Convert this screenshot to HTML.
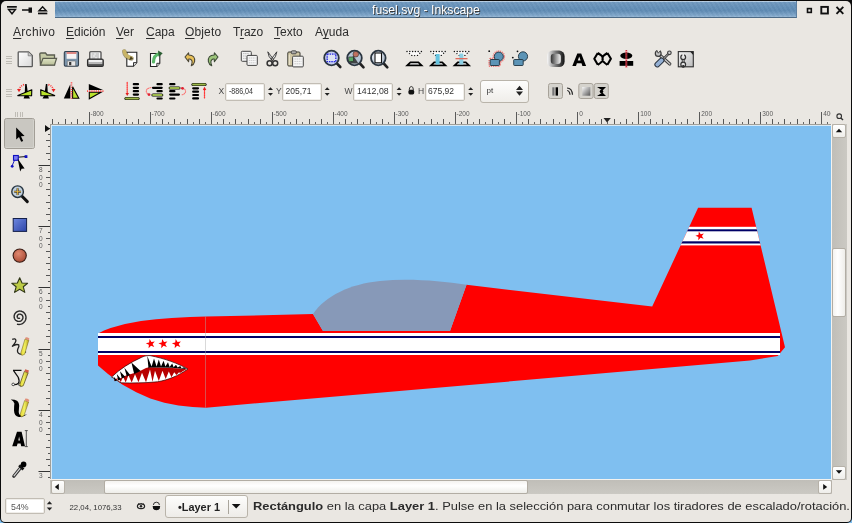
<!DOCTYPE html>
<html><head><meta charset="utf-8">
<style>
*{margin:0;padding:0;box-sizing:border-box}
html,body{width:852px;height:523px;overflow:hidden;background:#000}
body{position:relative;font-family:"Liberation Sans",sans-serif;color:#1a1a1a}
.a{position:absolute}
.menu,.t,.status,#ttext{filter:grayscale(1)}
#win{position:absolute;left:1px;top:1px;width:850px;height:521px;background:#eae7e2;border-radius:5px 5px 4px 4px}
#title{left:55px;top:1px;width:742px;height:17px;background:repeating-linear-gradient(60deg,rgba(255,255,255,0.035) 0 2px,rgba(0,0,0,0.02) 2px 4px),linear-gradient(#b6cde2 0,#b6cde2 1px,#7199bf 1px,#6490b8 40%,#5f8bb4 60%,#7fa6ca 90%,#95b6d4);border-bottom:1px solid #4c6a86;border-right:1px solid #5d80a2}
#ttext{left:317px;top:2px;color:#fff;font-size:12.4px;white-space:nowrap;text-shadow:1px 1px 0 #2a3a4a;transform:scaleX(0.985);transform-origin:0 0}
.menu{position:absolute;top:25px;font-size:12px;color:#2e2e2e;white-space:nowrap}
.u{text-decoration:underline;text-underline-offset:2px}
.ent{position:absolute;background:#fff;border:1px solid #c2bdb4;border-radius:2px;box-shadow:inset 0 0 0 1px #f0eeea}
.t{position:absolute;white-space:nowrap;transform-origin:0 0;color:#333}
.lab{position:absolute;font-size:10px;color:#444}
#canvas{left:50px;top:124px;width:781px;height:355px;background:#7fbff0;border-top:1px solid #a29f98;border-left:1px solid #a29f98;box-shadow:inset 1px 1px 0 #d6eaf8}
.rl{position:absolute;font-size:7px;color:#444;font-family:"Liberation Sans",sans-serif}
.status{position:absolute;top:500px;left:253px;font-size:11px;color:#2b2b2b;white-space:nowrap;transform-origin:0 0;transform:scaleX(1.172)}
</style></head><body>
<div class="a" style="left:0;top:500px;width:852px;height:23px;background:#7fbff0"></div>
<div class="a" style="left:0;top:0;width:852px;height:523px;background:#0c0c0c;border-radius:0 0 5px 5px"></div>
<div id="win"></div>
<!-- title bar -->
<div class="a" id="title"><div class="a" id="ttext">fusel.svg - Inkscape</div></div>

<!-- menu -->
<div class="menu" style="left:13px;letter-spacing:0.3px"><span class="u">A</span>rchivo</div>
<div class="menu" style="left:66px"><span class="u">E</span>dición</div>
<div class="menu" style="left:116px"><span class="u">V</span>er</div>
<div class="menu" style="left:146px"><span class="u">C</span>apa</div>
<div class="menu" style="left:185px;letter-spacing:0.15px"><span class="u">O</span>bjeto</div>
<div class="menu" style="left:233px">T<span class="u">r</span>azo</div>
<div class="menu" style="left:274px"><span class="u">T</span>exto</div>
<div class="menu" style="left:315px">A<span class="u">y</span>uda</div>

<!-- toolbar 2 entries -->
<div class="t" style="left:218.5px;top:85.5px;font-size:8.5px;color:#444">X</div>
<div class="ent" style="left:225px;top:82.5px;width:40px;height:18px"></div>
<div class="t" style="left:228.5px;top:85.5px;font-size:8.5px;transform:scaleX(0.83)">-886,04</div>
<div class="t" style="left:276px;top:85.5px;font-size:8.5px;color:#444">Y</div>
<div class="ent" style="left:282px;top:82.5px;width:40px;height:18px"></div>
<div class="t" style="left:285.5px;top:85.5px;font-size:8.5px;transform:scaleX(1.0)">205,71</div>
<div class="t" style="left:344.5px;top:85.5px;font-size:8.5px;color:#444">W</div>
<div class="ent" style="left:353px;top:82.5px;width:40px;height:18px"></div>
<div class="t" style="left:357px;top:85.5px;font-size:8.5px;transform:scaleX(1.03)">1412,08</div>
<div class="t" style="left:418px;top:85.5px;font-size:8.5px;color:#444">H</div>
<div class="ent" style="left:425px;top:82.5px;width:40px;height:18px"></div>
<div class="t" style="left:428px;top:85.5px;font-size:8.5px;transform:scaleX(1.0)">675,92</div>
<div class="a" style="left:480px;top:80px;width:48.5px;height:22.5px;background:linear-gradient(#fdfdfc,#efede9);border:1px solid #b9b4aa;border-radius:3px"></div>
<div class="t" style="left:486.5px;top:86px;font-size:8px">pt</div>

<!-- rulers -->
<svg class="a" style="left:0;top:0;filter:grayscale(1)" width="852" height="523" viewBox="0 0 852 523"><defs><style>.rt{font:6.5px "Liberation Sans",sans-serif;fill:#5a5a5a}</style><clipPath id="hrc"><rect x="51" y="100" width="780" height="25"/></clipPath><clipPath id="vrc"><rect x="30" y="124" width="21" height="355"/></clipPath></defs><g clip-path="url(#hrc)"><line x1="52.5" y1="119" x2="52.5" y2="124" stroke="#555"/><line x1="58.5" y1="122" x2="58.5" y2="124" stroke="#666"/><line x1="65.5" y1="119" x2="65.5" y2="124" stroke="#555"/><line x1="71.5" y1="122" x2="71.5" y2="124" stroke="#666"/><line x1="77.5" y1="119" x2="77.5" y2="124" stroke="#555"/><line x1="83.5" y1="122" x2="83.5" y2="124" stroke="#666"/><line x1="89.5" y1="112" x2="89.5" y2="124" stroke="#5a5a5a"/><text x="90.6" y="116" class="rt">-800</text><line x1="95.5" y1="122" x2="95.5" y2="124" stroke="#666"/><line x1="101.5" y1="119" x2="101.5" y2="124" stroke="#555"/><line x1="107.5" y1="122" x2="107.5" y2="124" stroke="#666"/><line x1="113.5" y1="119" x2="113.5" y2="124" stroke="#555"/><line x1="119.5" y1="122" x2="119.5" y2="124" stroke="#666"/><line x1="126.5" y1="119" x2="126.5" y2="124" stroke="#555"/><line x1="132.5" y1="122" x2="132.5" y2="124" stroke="#666"/><line x1="138.5" y1="119" x2="138.5" y2="124" stroke="#555"/><line x1="144.5" y1="122" x2="144.5" y2="124" stroke="#666"/><line x1="150.5" y1="112" x2="150.5" y2="124" stroke="#5a5a5a"/><text x="151.6" y="116" class="rt">-700</text><line x1="156.5" y1="122" x2="156.5" y2="124" stroke="#666"/><line x1="162.5" y1="119" x2="162.5" y2="124" stroke="#555"/><line x1="168.5" y1="122" x2="168.5" y2="124" stroke="#666"/><line x1="174.5" y1="119" x2="174.5" y2="124" stroke="#555"/><line x1="180.5" y1="122" x2="180.5" y2="124" stroke="#666"/><line x1="187.5" y1="119" x2="187.5" y2="124" stroke="#555"/><line x1="193.5" y1="122" x2="193.5" y2="124" stroke="#666"/><line x1="199.5" y1="119" x2="199.5" y2="124" stroke="#555"/><line x1="205.5" y1="122" x2="205.5" y2="124" stroke="#666"/><line x1="211.5" y1="112" x2="211.5" y2="124" stroke="#5a5a5a"/><text x="212.6" y="116" class="rt">-600</text><line x1="217.5" y1="122" x2="217.5" y2="124" stroke="#666"/><line x1="223.5" y1="119" x2="223.5" y2="124" stroke="#555"/><line x1="229.5" y1="122" x2="229.5" y2="124" stroke="#666"/><line x1="235.5" y1="119" x2="235.5" y2="124" stroke="#555"/><line x1="241.5" y1="122" x2="241.5" y2="124" stroke="#666"/><line x1="248.5" y1="119" x2="248.5" y2="124" stroke="#555"/><line x1="254.5" y1="122" x2="254.5" y2="124" stroke="#666"/><line x1="260.5" y1="119" x2="260.5" y2="124" stroke="#555"/><line x1="266.5" y1="122" x2="266.5" y2="124" stroke="#666"/><line x1="272.5" y1="112" x2="272.5" y2="124" stroke="#5a5a5a"/><text x="273.6" y="116" class="rt">-500</text><line x1="278.5" y1="122" x2="278.5" y2="124" stroke="#666"/><line x1="284.5" y1="119" x2="284.5" y2="124" stroke="#555"/><line x1="290.5" y1="122" x2="290.5" y2="124" stroke="#666"/><line x1="296.5" y1="119" x2="296.5" y2="124" stroke="#555"/><line x1="302.5" y1="122" x2="302.5" y2="124" stroke="#666"/><line x1="309.5" y1="119" x2="309.5" y2="124" stroke="#555"/><line x1="315.5" y1="122" x2="315.5" y2="124" stroke="#666"/><line x1="321.5" y1="119" x2="321.5" y2="124" stroke="#555"/><line x1="327.5" y1="122" x2="327.5" y2="124" stroke="#666"/><line x1="333.5" y1="112" x2="333.5" y2="124" stroke="#5a5a5a"/><text x="334.6" y="116" class="rt">-400</text><line x1="339.5" y1="122" x2="339.5" y2="124" stroke="#666"/><line x1="345.5" y1="119" x2="345.5" y2="124" stroke="#555"/><line x1="351.5" y1="122" x2="351.5" y2="124" stroke="#666"/><line x1="357.5" y1="119" x2="357.5" y2="124" stroke="#555"/><line x1="363.5" y1="122" x2="363.5" y2="124" stroke="#666"/><line x1="370.5" y1="119" x2="370.5" y2="124" stroke="#555"/><line x1="376.5" y1="122" x2="376.5" y2="124" stroke="#666"/><line x1="382.5" y1="119" x2="382.5" y2="124" stroke="#555"/><line x1="388.5" y1="122" x2="388.5" y2="124" stroke="#666"/><line x1="394.5" y1="112" x2="394.5" y2="124" stroke="#5a5a5a"/><text x="395.6" y="116" class="rt">-300</text><line x1="400.5" y1="122" x2="400.5" y2="124" stroke="#666"/><line x1="406.5" y1="119" x2="406.5" y2="124" stroke="#555"/><line x1="412.5" y1="122" x2="412.5" y2="124" stroke="#666"/><line x1="418.5" y1="119" x2="418.5" y2="124" stroke="#555"/><line x1="424.5" y1="122" x2="424.5" y2="124" stroke="#666"/><line x1="431.5" y1="119" x2="431.5" y2="124" stroke="#555"/><line x1="437.5" y1="122" x2="437.5" y2="124" stroke="#666"/><line x1="443.5" y1="119" x2="443.5" y2="124" stroke="#555"/><line x1="449.5" y1="122" x2="449.5" y2="124" stroke="#666"/><line x1="455.5" y1="112" x2="455.5" y2="124" stroke="#5a5a5a"/><text x="456.6" y="116" class="rt">-200</text><line x1="461.5" y1="122" x2="461.5" y2="124" stroke="#666"/><line x1="467.5" y1="119" x2="467.5" y2="124" stroke="#555"/><line x1="473.5" y1="122" x2="473.5" y2="124" stroke="#666"/><line x1="479.5" y1="119" x2="479.5" y2="124" stroke="#555"/><line x1="485.5" y1="122" x2="485.5" y2="124" stroke="#666"/><line x1="492.5" y1="119" x2="492.5" y2="124" stroke="#555"/><line x1="498.5" y1="122" x2="498.5" y2="124" stroke="#666"/><line x1="504.5" y1="119" x2="504.5" y2="124" stroke="#555"/><line x1="510.5" y1="122" x2="510.5" y2="124" stroke="#666"/><line x1="516.5" y1="112" x2="516.5" y2="124" stroke="#5a5a5a"/><text x="517.6" y="116" class="rt">-100</text><line x1="522.5" y1="122" x2="522.5" y2="124" stroke="#666"/><line x1="528.5" y1="119" x2="528.5" y2="124" stroke="#555"/><line x1="534.5" y1="122" x2="534.5" y2="124" stroke="#666"/><line x1="540.5" y1="119" x2="540.5" y2="124" stroke="#555"/><line x1="546.5" y1="122" x2="546.5" y2="124" stroke="#666"/><line x1="553.5" y1="119" x2="553.5" y2="124" stroke="#555"/><line x1="559.5" y1="122" x2="559.5" y2="124" stroke="#666"/><line x1="565.5" y1="119" x2="565.5" y2="124" stroke="#555"/><line x1="571.5" y1="122" x2="571.5" y2="124" stroke="#666"/><line x1="577.5" y1="112" x2="577.5" y2="124" stroke="#5a5a5a"/><text x="579.2" y="116" class="rt">0</text><line x1="583.5" y1="122" x2="583.5" y2="124" stroke="#666"/><line x1="589.5" y1="119" x2="589.5" y2="124" stroke="#555"/><line x1="595.5" y1="122" x2="595.5" y2="124" stroke="#666"/><line x1="601.5" y1="119" x2="601.5" y2="124" stroke="#555"/><line x1="607.5" y1="122" x2="607.5" y2="124" stroke="#666"/><line x1="614.5" y1="119" x2="614.5" y2="124" stroke="#555"/><line x1="620.5" y1="122" x2="620.5" y2="124" stroke="#666"/><line x1="626.5" y1="119" x2="626.5" y2="124" stroke="#555"/><line x1="632.5" y1="122" x2="632.5" y2="124" stroke="#666"/><line x1="638.5" y1="112" x2="638.5" y2="124" stroke="#5a5a5a"/><text x="640.2" y="116" class="rt">100</text><line x1="644.5" y1="122" x2="644.5" y2="124" stroke="#666"/><line x1="650.5" y1="119" x2="650.5" y2="124" stroke="#555"/><line x1="656.5" y1="122" x2="656.5" y2="124" stroke="#666"/><line x1="662.5" y1="119" x2="662.5" y2="124" stroke="#555"/><line x1="668.5" y1="122" x2="668.5" y2="124" stroke="#666"/><line x1="675.5" y1="119" x2="675.5" y2="124" stroke="#555"/><line x1="681.5" y1="122" x2="681.5" y2="124" stroke="#666"/><line x1="687.5" y1="119" x2="687.5" y2="124" stroke="#555"/><line x1="693.5" y1="122" x2="693.5" y2="124" stroke="#666"/><line x1="699.5" y1="112" x2="699.5" y2="124" stroke="#5a5a5a"/><text x="701.2" y="116" class="rt">200</text><line x1="705.5" y1="122" x2="705.5" y2="124" stroke="#666"/><line x1="711.5" y1="119" x2="711.5" y2="124" stroke="#555"/><line x1="717.5" y1="122" x2="717.5" y2="124" stroke="#666"/><line x1="723.5" y1="119" x2="723.5" y2="124" stroke="#555"/><line x1="729.5" y1="122" x2="729.5" y2="124" stroke="#666"/><line x1="736.5" y1="119" x2="736.5" y2="124" stroke="#555"/><line x1="742.5" y1="122" x2="742.5" y2="124" stroke="#666"/><line x1="748.5" y1="119" x2="748.5" y2="124" stroke="#555"/><line x1="754.5" y1="122" x2="754.5" y2="124" stroke="#666"/><line x1="760.5" y1="112" x2="760.5" y2="124" stroke="#5a5a5a"/><text x="762.2" y="116" class="rt">300</text><line x1="766.5" y1="122" x2="766.5" y2="124" stroke="#666"/><line x1="772.5" y1="119" x2="772.5" y2="124" stroke="#555"/><line x1="778.5" y1="122" x2="778.5" y2="124" stroke="#666"/><line x1="784.5" y1="119" x2="784.5" y2="124" stroke="#555"/><line x1="790.5" y1="122" x2="790.5" y2="124" stroke="#666"/><line x1="797.5" y1="119" x2="797.5" y2="124" stroke="#555"/><line x1="803.5" y1="122" x2="803.5" y2="124" stroke="#666"/><line x1="809.5" y1="119" x2="809.5" y2="124" stroke="#555"/><line x1="815.5" y1="122" x2="815.5" y2="124" stroke="#666"/><line x1="821.5" y1="112" x2="821.5" y2="124" stroke="#5a5a5a"/><text x="823.2" y="116" class="rt">400</text><line x1="827.5" y1="122" x2="827.5" y2="124" stroke="#666"/></g><g clip-path="url(#vrc)"><line x1="46" y1="128.5" x2="50" y2="128.5" stroke="#555"/><line x1="48" y1="134.5" x2="50" y2="134.5" stroke="#555"/><line x1="46" y1="140.5" x2="50" y2="140.5" stroke="#555"/><line x1="48" y1="146.5" x2="50" y2="146.5" stroke="#555"/><line x1="46" y1="153.5" x2="50" y2="153.5" stroke="#555"/><line x1="48" y1="159.5" x2="50" y2="159.5" stroke="#555"/><line x1="38.5" y1="165.5" x2="50" y2="165.5" stroke="#333"/><text x="39" y="172.1" class="rt">8</text><text x="39" y="179.5" class="rt">0</text><text x="39" y="186.9" class="rt">0</text><line x1="48" y1="171.5" x2="50" y2="171.5" stroke="#555"/><line x1="46" y1="177.5" x2="50" y2="177.5" stroke="#555"/><line x1="48" y1="183.5" x2="50" y2="183.5" stroke="#555"/><line x1="46" y1="189.5" x2="50" y2="189.5" stroke="#555"/><line x1="48" y1="195.5" x2="50" y2="195.5" stroke="#555"/><line x1="46" y1="202.5" x2="50" y2="202.5" stroke="#555"/><line x1="48" y1="208.5" x2="50" y2="208.5" stroke="#555"/><line x1="46" y1="214.5" x2="50" y2="214.5" stroke="#555"/><line x1="48" y1="220.5" x2="50" y2="220.5" stroke="#555"/><line x1="38.5" y1="226.5" x2="50" y2="226.5" stroke="#333"/><text x="39" y="233.1" class="rt">7</text><text x="39" y="240.5" class="rt">0</text><text x="39" y="247.9" class="rt">0</text><line x1="48" y1="232.5" x2="50" y2="232.5" stroke="#555"/><line x1="46" y1="238.5" x2="50" y2="238.5" stroke="#555"/><line x1="48" y1="244.5" x2="50" y2="244.5" stroke="#555"/><line x1="46" y1="251.5" x2="50" y2="251.5" stroke="#555"/><line x1="48" y1="257.5" x2="50" y2="257.5" stroke="#555"/><line x1="46" y1="263.5" x2="50" y2="263.5" stroke="#555"/><line x1="48" y1="269.5" x2="50" y2="269.5" stroke="#555"/><line x1="46" y1="275.5" x2="50" y2="275.5" stroke="#555"/><line x1="48" y1="281.5" x2="50" y2="281.5" stroke="#555"/><line x1="38.5" y1="287.5" x2="50" y2="287.5" stroke="#333"/><text x="39" y="294.1" class="rt">6</text><text x="39" y="301.5" class="rt">0</text><text x="39" y="308.90000000000003" class="rt">0</text><line x1="48" y1="293.5" x2="50" y2="293.5" stroke="#555"/><line x1="46" y1="300.5" x2="50" y2="300.5" stroke="#555"/><line x1="48" y1="306.5" x2="50" y2="306.5" stroke="#555"/><line x1="46" y1="312.5" x2="50" y2="312.5" stroke="#555"/><line x1="48" y1="318.5" x2="50" y2="318.5" stroke="#555"/><line x1="46" y1="324.5" x2="50" y2="324.5" stroke="#555"/><line x1="48" y1="330.5" x2="50" y2="330.5" stroke="#555"/><line x1="46" y1="336.5" x2="50" y2="336.5" stroke="#555"/><line x1="48" y1="342.5" x2="50" y2="342.5" stroke="#555"/><line x1="38.5" y1="349.5" x2="50" y2="349.5" stroke="#333"/><text x="39" y="356.1" class="rt">5</text><text x="39" y="363.5" class="rt">0</text><text x="39" y="370.90000000000003" class="rt">0</text><line x1="48" y1="355.5" x2="50" y2="355.5" stroke="#555"/><line x1="46" y1="361.5" x2="50" y2="361.5" stroke="#555"/><line x1="48" y1="367.5" x2="50" y2="367.5" stroke="#555"/><line x1="46" y1="373.5" x2="50" y2="373.5" stroke="#555"/><line x1="48" y1="379.5" x2="50" y2="379.5" stroke="#555"/><line x1="46" y1="385.5" x2="50" y2="385.5" stroke="#555"/><line x1="48" y1="391.5" x2="50" y2="391.5" stroke="#555"/><line x1="46" y1="398.5" x2="50" y2="398.5" stroke="#555"/><line x1="48" y1="404.5" x2="50" y2="404.5" stroke="#555"/><line x1="38.5" y1="410.5" x2="50" y2="410.5" stroke="#333"/><text x="39" y="417.1" class="rt">4</text><text x="39" y="424.5" class="rt">0</text><text x="39" y="431.90000000000003" class="rt">0</text><line x1="48" y1="416.5" x2="50" y2="416.5" stroke="#555"/><line x1="46" y1="422.5" x2="50" y2="422.5" stroke="#555"/><line x1="48" y1="428.5" x2="50" y2="428.5" stroke="#555"/><line x1="46" y1="434.5" x2="50" y2="434.5" stroke="#555"/><line x1="48" y1="440.5" x2="50" y2="440.5" stroke="#555"/><line x1="46" y1="447.5" x2="50" y2="447.5" stroke="#555"/><line x1="48" y1="453.5" x2="50" y2="453.5" stroke="#555"/><line x1="46" y1="459.5" x2="50" y2="459.5" stroke="#555"/><line x1="48" y1="465.5" x2="50" y2="465.5" stroke="#555"/><line x1="38.5" y1="471.5" x2="50" y2="471.5" stroke="#333"/><text x="39" y="478.1" class="rt">3</text><text x="39" y="485.5" class="rt">0</text><text x="39" y="492.90000000000003" class="rt">0</text><line x1="48" y1="477.5" x2="50" y2="477.5" stroke="#555"/></g><path d="M603.5,118 L610.8,118 L607.1,122.4 Z" fill="#222"/><path d="M45,125 L45,132 L50.2,128.8 Z" fill="#111"/></svg>
<div class="a" id="canvas"></div>
<svg class="a" style="left:0;top:0" width="852" height="523" viewBox="0 0 852 523">
<defs><clipPath id="cc"><rect x="51" y="125" width="780" height="354"/></clipPath>
<path id="star" d="M0,-4.8 L1.2,-1.6 L4.6,-1.5 L1.9,0.6 L2.9,3.9 L0,2 L-2.9,3.9 L-1.9,0.6 L-4.6,-1.5 L-1.2,-1.6 Z"/></defs>
<g clip-path="url(#cc)">
<path fill="#f00" d="M98,333.4 L104,330.5 L110.6,327.9 L125,324 L141,321 L156,319.2 L171.7,318 L190,317 L206,316.6 L313,314 L323,331 L450,331 L466.5,284.8 L652.2,306.5 L698.1,207.8 L751.6,207.8 L785,347.2 L777.7,356 L750,360.6 L206,407.7 L192.6,407 L178.5,405.6 L164.4,402.8 L150.3,398.6 L136.3,392.3 L122.2,384.5 L108,374 L98,365.5 Z"/>
<path fill="#8799b8" d="M313,314 C325,296 350,284 380,281 C410,278 440,281 466.5,284.8 L450,331 L323,331 Z"/>
<rect x="98" y="333" width="682" height="22" fill="#fff"/>
<rect x="98" y="336" width="682" height="2" fill="#000066"/>
<rect x="98" y="351" width="682" height="2" fill="#000066"/>
<clipPath id="tailclip"><path d="M698.1,207.8 L751.6,207.8 L785,347.2 L640,347.2 L652.2,306.5 Z"/></clipPath>
<g clip-path="url(#tailclip)">
<rect x="670" y="226.8" width="110" height="18.6" fill="#fff"/>
<rect x="670" y="229.3" width="110" height="2" fill="#000066"/>
<rect x="670" y="241.3" width="110" height="2.2" fill="#000066"/>
</g>
<use href="#star" transform="translate(150.6,343.8) rotate(-12)" fill="#f00"/>
<use href="#star" transform="translate(163.2,343.8) rotate(-12)" fill="#f00"/>
<use href="#star" transform="translate(176.7,343.8) rotate(-12)" fill="#f00"/>
<use href="#star" transform="translate(700,235.9) rotate(-15) scale(0.95)" fill="#f00"/>
<line x1="205.5" y1="316.6" x2="205.5" y2="407.7" stroke="#aaa" stroke-opacity="0.45" stroke-width="1"/>
<path fill="#fff" stroke="#2a0000" stroke-width="0.7" d="M111.6,377 C120,369 130,362.5 141.8,357.2 C145,355.8 147,355.5 150,355.6 C165,358.5 178,363.5 187.9,369 C178,376 168,380 157.4,381.8 C145,383 132,383.2 121,382.8 Z"/>
<path fill="#b80000" d="M114.0,381.0 L120.5,378.2 L126.0,375.5 L131.0,374.0 L136.0,372.5 L141.0,370.6 L146.0,368.0 L149.0,367.3 L160.0,367.6 L172.0,368.0 L181.0,368.6 L186.5,369.2 L182.7,371.3 L180.8,372.8 L178.8,372.6 L176.5,374.9 L174.2,372.2 L171.5,377.3 L168.8,371.5 L165.7,379.1 L162.5,370.8 L158.8,380.9 L155.0,370.8 L152.5,381.7 L150.0,369.6 L146.0,382.2 L142.0,372.8 L138.5,382.3 L135.0,374.2 L131.7,382.4 L128.4,375.2 L125.7,382.4 L123.0,376.6 L120.8,382.3 L118.5,378.2 L115.2,379.0 Z"/>
<path fill="#000" d="M131.4,362.6 L134.2,374 L140.6,371 Z M124.4,367.8 L126.8,376.4 L130.2,375 Z M120,371.2 L121.8,378.6 L125.4,377 Z M116.8,374 L118.2,380.4 L121,379.2 Z M113.6,376.4 L114.8,381.2 L117,380.6 Z"/>
<path fill="#000" d="M147.3,356 L151.6,366.5 L154,358.6 L156.6,366.4 L158.8,359.6 L161,366.4 L163.6,360.8 L165.4,366.6 L168,362.3 L169.6,366.9 L172.2,363.6 L173.6,367.3 L176,364.8 L177.6,367.6 L180.2,365.9 L181.6,368.2 L184,367.3 L186.5,368.9 L172,367.8 L160,367.4 L149.5,367.4 L148.5,368.5 Z"/>
</g>
</svg>

<!-- scrollbars -->
<div class="a" style="left:831px;top:124px;width:1px;height:356px;background:#f3f2ef"></div>
<div class="a" style="left:832px;top:124px;width:15px;height:356px;background:linear-gradient(90deg,#c0beb8,#cbc9c3)"></div>
<div class="a" style="left:832px;top:248px;width:14px;height:69px;background:linear-gradient(90deg,#f4f3f0,#fff 40%,#eeede9);border:1px solid #b2ada4;border-radius:2px"></div>
<div class="a" style="left:832px;top:124px;width:14px;height:14px;background:linear-gradient(#fff,#efeeea);border:1px solid #b6b1a8;border-radius:2px"></div>
<div class="a" style="left:832px;top:466px;width:14px;height:14px;background:linear-gradient(#fff,#efeeea);border:1px solid #b6b1a8;border-radius:2px"></div>
<div class="a" style="left:50px;top:479px;width:782px;height:1px;background:#f3f2ef"></div>
<div class="a" style="left:50px;top:480px;width:782px;height:14px;background:linear-gradient(#c0beb8,#cbc9c3)"></div>
<div class="a" style="left:104px;top:480px;width:424px;height:14px;background:linear-gradient(#f4f3f0,#fff 40%,#eeede9);border:1px solid #b2ada4;border-radius:2px"></div>
<div class="a" style="left:50.5px;top:480px;width:14.5px;height:14px;background:linear-gradient(#fff,#efeeea);border:1px solid #b6b1a8;border-radius:2px"></div>
<div class="a" style="left:818px;top:480px;width:14px;height:14px;background:linear-gradient(#fff,#efeeea);border:1px solid #b6b1a8;border-radius:2px"></div>

<!-- status bar -->
<div class="ent" style="left:5px;top:498px;width:40px;height:16px"></div>
<div class="t" style="left:11px;top:501.5px;font-size:8.8px;color:#555">54%</div>
<div class="t" style="left:69.5px;top:502.5px;font-size:7.8px;color:#333;transform:scaleX(1.0)">22,04, 1076,33</div>
<div class="a" style="left:164.5px;top:495px;width:83.5px;height:22.5px;background:linear-gradient(#fdfdfc,#eeece8);border:1px solid #b9b4aa;border-radius:3px"></div>
<div class="t" style="left:177.5px;top:501.5px;font-size:10.2px;font-weight:bold;color:#222;transform:scaleX(1.07)">•Layer 1</div>
<div class="status"><b>Rectángulo</b> en la capa <b>Layer 1</b>. Pulse en la selección para conmutar los tiradores de escalado/rotación.</div>
<svg class="a" style="left:0;top:0" width="852" height="523" viewBox="0 0 852 523">
<defs>
<linearGradient id="gdoc" x1="0" y1="0" x2="1" y2="1"><stop offset="0" stop-color="#fff"/><stop offset="1" stop-color="#d8d8d8"/></linearGradient>
<linearGradient id="gfold" x1="0" y1="0" x2="0" y2="1"><stop offset="0" stop-color="#dfe3c4"/><stop offset="1" stop-color="#b9bf98"/></linearGradient>
<linearGradient id="gfs" x1="0" y1="0" x2="1" y2="0"><stop offset="0" stop-color="#fff"/><stop offset="0.25" stop-color="#666"/><stop offset="0.55" stop-color="#999"/><stop offset="0.8" stop-color="#222"/><stop offset="1" stop-color="#eee"/></linearGradient>
<linearGradient id="gsq" x1="0" y1="0" x2="1" y2="1"><stop offset="0" stop-color="#fafafa"/><stop offset="1" stop-color="#555"/></linearGradient>
<radialGradient id="glens" cx="0.4" cy="0.35" r="0.7"><stop offset="0" stop-color="#f4f6fa"/><stop offset="1" stop-color="#aab8c8"/></radialGradient>
</defs>
<!-- title bar icons -->
<rect x="7" y="6" width="9.8" height="1.7" fill="#111"/>
<path d="M8.6,9.6 L15.4,9.6 L12,13.8 Z" fill="none" stroke="#111" stroke-width="1.5" stroke-linejoin="miter"/>
<path d="M22,9.3 L29,9.3 L29,10.8 L22,10.8 Z M28.5,7.5 L32,7.5 L32,12.8 L28.5,12.8 Z" fill="#111"/>
<path d="M39,10.8 L42.6,6.8 L46.3,10.8 Z" fill="none" stroke="#111" stroke-width="1.4"/>
<rect x="38" y="12.6" width="9.3" height="1.7" fill="#111"/>
<rect x="807.5" y="8.6" width="3.8" height="3.8" fill="none" stroke="#111" stroke-width="1.6"/>
<rect x="821.3" y="6.9" width="6.6" height="6.6" fill="none" stroke="#111" stroke-width="1.9"/>
<path d="M836.5,6.8 L843.3,13.8 M843.3,6.8 L836.5,13.8" stroke="#111" stroke-width="1.9"/>
<!-- toolbar grips -->
<g fill="#bfbcb5"><rect x="6" y="56" width="6" height="1"/><rect x="6" y="58" width="6" height="1"/><rect x="6" y="61" width="6" height="1"/><rect x="6" y="63" width="6" height="1"/>
<rect x="6" y="89" width="6" height="1"/><rect x="6" y="91" width="6" height="1"/><rect x="6" y="94" width="6" height="1"/><rect x="6" y="96" width="6" height="1"/>
<rect x="15" y="112" width="1" height="5"/><rect x="17" y="112" width="1" height="5"/><rect x="20" y="112" width="1" height="5"/><rect x="22" y="112" width="1" height="5"/></g>
<!-- new -->
<path d="M18.2,52.5 Q18.2,51.8 19,51.8 L28.5,51.8 L32.3,55.6 L32.3,66 Q32.3,66.7 31.6,66.7 L19,66.7 Q18.2,66.7 18.2,66 Z" fill="url(#gdoc)" stroke="#5a5a5a" stroke-width="1.3"/>
<path d="M28.2,52 L28.2,55.8 L32,55.8" fill="#ccc" stroke="#777" stroke-width="0.8"/>
<!-- open folder -->
<path d="M39.8,54 Q39.8,53 41,53 L45.5,53 L47,55 L54.5,55 L54.5,65 L40.5,65 Z" fill="#c6cba6" stroke="#5b5d50" stroke-width="1.3"/>
<path d="M40.5,65 L43,58.3 L56.6,58.3 L54.5,65 Z" fill="url(#gfold)" stroke="#5b5d50" stroke-width="1.2"/>
<!-- save floppy -->
<rect x="64.3" y="51.5" width="14.2" height="14.6" rx="1.2" fill="#7c95ac" stroke="#33414f" stroke-width="1.1"/>
<rect x="66.6" y="52.2" width="9.8" height="6.6" fill="#f8f4f4"/>
<rect x="66.6" y="52.2" width="9.8" height="1.6" fill="#d9706a"/>
<rect x="67.3" y="61" width="8.3" height="4.9" rx="0.6" fill="#e8e8e8" stroke="#555" stroke-width="0.5"/>
<rect x="69.1" y="62" width="2.2" height="3.2" fill="#333"/>
<!-- print -->
<rect x="89.8" y="51.7" width="11.2" height="8.6" rx="0.8" fill="#f6f6f6" stroke="#333" stroke-width="1.1"/>
<path d="M91.5,54 h3 M95.5,54 h3.5 M91.5,56 h2 M94.5,56 h4.5 M91.5,58 h4 M96.5,58 h2.5" stroke="#888" stroke-width="0.7"/>
<path d="M87.5,60.5 Q87.5,59 89,59 L101.8,59 Q103.3,59 103.3,60.5 L103.3,65.2 Q103.3,66.4 102,66.4 L88.8,66.4 Q87.5,66.4 87.5,65.2 Z" fill="#5a5a5a" stroke="#2e2e2e" stroke-width="1.1"/>
<rect x="88.5" y="60" width="13.8" height="2.6" fill="#f0f0f0"/>
<rect x="88.5" y="62.6" width="13.8" height="1.4" fill="#b8b8b8"/>
<!-- import -->
<path d="M126.8,52.3 L136.8,52.3 L136.8,62.6 L133.5,66.2 L126.8,66.2 Z" fill="#fff" stroke="#222" stroke-width="1.1"/>
<path d="M133.5,66.2 L133.5,62.6 L136.8,62.6" fill="#ddd" stroke="#222" stroke-width="0.9"/>
<path d="M124.3,51.5 Q125,57 131.5,58.5" fill="none" stroke="#5a4e20" stroke-width="4.6" stroke-linecap="round" opacity="0.55"/>
<path d="M124.3,51.2 Q125,56.5 131.2,58" fill="none" stroke="#c8b466" stroke-width="3.6" stroke-linecap="round"/>
<path d="M129,60.3 L133.2,59 L130.8,56.3 Z" fill="#4a4020"/>
<!-- export -->
<path d="M150.5,53.5 L159.8,53.5 L159.8,63.3 L156.8,66.5 L150.5,66.5 Z" fill="#fff" stroke="#222" stroke-width="1.1"/>
<path d="M156.8,66.5 L156.8,63.3 L159.8,63.3" fill="#ddd" stroke="#222" stroke-width="0.9"/>
<path d="M153.5,62 Q153.5,55.5 159,53.8" fill="none" stroke="#5cb86a" stroke-width="3.2" stroke-linecap="round"/>
<path d="M158,50.5 L162.7,53.2 L158.8,57 Z" fill="#2c5e34"/>
<!-- undo -->
<path d="M185,57 L188.6,52.8 L188.8,55 Q195.5,55.2 194.6,61.6 Q193.8,64.8 191.3,65.8 Q192.8,61.6 191.5,60.2 Q190.4,58.8 188.8,59.1 L188.6,61.6 Z" fill="#e8c058" stroke="#4a4636" stroke-width="1.1" stroke-linejoin="round"/>
<!-- redo -->
<path d="M218,57 L214.4,52.8 L214.2,55 Q207.5,55.2 208.4,61.6 Q209.2,64.8 211.7,65.8 Q210.2,61.6 211.5,60.2 Q212.6,58.8 214.2,59.1 L214.4,61.6 Z" fill="#9cc47a" stroke="#3c4a36" stroke-width="1.1" stroke-linejoin="round"/>
<!-- copy -->
<rect x="241.3" y="51.3" width="10" height="10" rx="1" fill="#f2f2f2" stroke="#444" stroke-width="1"/>
<path d="M243,53.6 h6 M243,56 h6 M243,58.4 h6" stroke="#999" stroke-width="0.6" stroke-dasharray="1.5,0.6"/>
<rect x="247" y="55.4" width="10.3" height="10" rx="1" fill="#f6f6f6" stroke="#444" stroke-width="1"/>
<path d="M248.8,58 h6.8 M248.8,60.4 h6.8 M248.8,62.8 h6.8" stroke="#aaa" stroke-width="0.6" stroke-dasharray="1.5,0.6"/>
<!-- cut -->
<path d="M267.8,51.8 Q268.2,57 272.3,60.6 L273.6,59.4 Q270.5,55.5 267.8,51.8 Z M276.8,51.8 Q276.4,57 272.3,60.6 L271,59.4 Q274,55.5 276.8,51.8 Z" fill="#ddd" stroke="#333" stroke-width="0.9"/>
<circle cx="269.6" cy="63.3" r="2.5" fill="none" stroke="#333" stroke-width="1.5"/>
<circle cx="275.2" cy="63.3" r="2.5" fill="none" stroke="#333" stroke-width="1.5"/>
<!-- paste -->
<rect x="287.8" y="52" width="12.2" height="14" rx="1" fill="#cfc6a4" stroke="#3b3a33" stroke-width="1"/>
<path d="M289.3,54.5 v10.5" stroke="#e9e3cc" stroke-width="1.2"/>
<rect x="291.3" y="50.8" width="5" height="3" rx="1" fill="#aaa" stroke="#333" stroke-width="0.8"/>
<rect x="292.6" y="56.2" width="10.7" height="10.7" rx="1" fill="#f6f6f6" stroke="#444" stroke-width="1"/>
<path d="M294.4,59 h7 M294.4,61.4 h7 M294.4,63.8 h7" stroke="#aaa" stroke-width="0.6" stroke-dasharray="1.5,0.6"/>
<!-- zoom sel -->
<path d="M336.8,63.3 L340.3,67" stroke="#222" stroke-width="2.6" stroke-linecap="round"/>
<circle cx="331.5" cy="58" r="7.3" fill="#c4cdf0" stroke="#2a3540" stroke-width="1.8"/>
<rect x="327.2" y="54.1" width="8.6" height="7.6" fill="#dde2f2" stroke="#2828e0" stroke-width="1.3" stroke-dasharray="1.5,0.9"/>
<!-- zoom drawing -->
<path d="M359.5,63 L363.5,67.3" stroke="#222" stroke-width="2.6" stroke-linecap="round"/>
<circle cx="354.5" cy="58" r="7.3" fill="#b8c6d6" stroke="#2a3540" stroke-width="1.8"/>
<path d="M353.3,55.5 L358.5,63.5 L349.5,63.5 Z" fill="#222" opacity="0.8"/>
<circle cx="355.8" cy="54.2" r="2.8" fill="#c07060" stroke="#333" stroke-width="0.6"/>
<rect x="348.8" y="57" width="4.6" height="4.6" fill="#5aa868" stroke="#222" stroke-width="0.6"/>
<!-- zoom page -->
<path d="M383.3,63 L387.3,67.3" stroke="#222" stroke-width="2.6" stroke-linecap="round"/>
<circle cx="378.3" cy="58" r="7.3" fill="url(#glens)" stroke="#2a3540" stroke-width="1.8"/>
<rect x="375" y="53" width="6.5" height="9.8" fill="#fff" stroke="#111" stroke-width="1.1"/>
<!-- layers icons -->
<g id="lay">
<path d="M406.5,51.3 L422.3,51.3 L417.8,55.5 L411.2,55.5 Z" fill="#fff" opacity="0.8"/>
<g fill="#111"><circle cx="407" cy="51.4" r="0.75"/><circle cx="409.8" cy="51.4" r="0.75"/><circle cx="412.6" cy="51.4" r="0.75"/><circle cx="415.4" cy="51.4" r="0.75"/><circle cx="418.2" cy="51.4" r="0.75"/><circle cx="421.4" cy="51.4" r="0.75"/>
<circle cx="409.5" cy="53.6" r="0.7"/><circle cx="419.8" cy="53.2" r="0.7"/><circle cx="411.8" cy="55.4" r="0.7"/><circle cx="414.6" cy="55.6" r="0.7"/><circle cx="417.5" cy="55.4" r="0.7"/></g>
<path d="M410.4,62.3 L418.4,62.3 L421.6,65.4 L407.2,65.4 Z" fill="#fff" stroke="#000" stroke-width="1.7" stroke-linejoin="miter"/>
</g>
<use href="#lay" x="23.8"/>
<rect x="435.6" y="54" width="4" height="10.5" fill="#66c4e0"/>
<use href="#lay" x="47.4"/>
<rect x="459.3" y="53.5" width="4" height="11" fill="#8ccfe4"/>
<rect x="455.5" y="58" width="12" height="1.3" fill="#e06a5c"/>
<!-- group -->
<g stroke="#f05050" stroke-width="2.2" stroke-dasharray="0.9,0.9" fill="none" opacity="0.8">
<circle cx="498.8" cy="56.6" r="5.2"/><rect x="489.4" y="58.8" width="10.5" height="7.2" rx="1"/></g>
<circle cx="498.8" cy="56.6" r="4.5" fill="#5c94b6" stroke="#1f3442" stroke-width="0.9"/>
<rect x="490.2" y="59.5" width="9.2" height="6" rx="0.8" fill="#5c94b6" stroke="#1f3442" stroke-width="0.9"/>
<circle cx="489.2" cy="51.2" r="0.9" fill="#111"/>
<!-- ungroup -->
<circle cx="523" cy="56.4" r="4.6" fill="#5c94b6" stroke="#1f3442" stroke-width="0.9"/>
<rect x="513.7" y="59.5" width="9.5" height="6" rx="0.8" fill="#5c94b6" stroke="#1f3442" stroke-width="0.9"/>
<circle cx="512.8" cy="57.6" r="0.9" fill="#111"/><circle cx="517.5" cy="51.3" r="0.9" fill="#111"/>
<!-- fill stroke -->
<defs><linearGradient id="gfs1" x1="0" y1="0" x2="1" y2="0"><stop offset="0" stop-color="#f8f8f8"/><stop offset="0.5" stop-color="#777"/><stop offset="1" stop-color="#111"/></linearGradient>
<linearGradient id="gfs2" x1="0" y1="0" x2="1" y2="0"><stop offset="0" stop-color="#333"/><stop offset="0.6" stop-color="#aaa"/><stop offset="1" stop-color="#f4f4f4"/></linearGradient></defs>
<rect x="547" y="50.6" width="17.6" height="16.4" rx="5.5" fill="url(#gfs1)"/>
<rect x="550.8" y="53.8" width="10" height="10.2" rx="3" fill="url(#gfs2)"/>
<!-- text A -->
<path d="M572.3,65.9 L577.3,53.5 L581.2,53.5 L586.1,65.9 L582.4,65.9 L581.5,63.3 L576.9,63.3 L576,65.9 Z M577.8,60.6 L580.6,60.6 L579.2,56.4 Z" fill="#000"/>
<!-- XML -->
<path d="M597.8,53 L594.3,58.8 L597.8,64.8 M607.4,53 L610.9,58.8 L607.4,64.8 M597.8,53 Q603.8,56.5 602.6,58.8 Q601.4,61.1 607.4,64.8 M607.4,53 Q601.4,56.5 602.6,58.8 Q603.8,61.1 597.8,64.8" fill="none" stroke="#000" stroke-width="2.1" stroke-linejoin="round"/>
<!-- align -->
<ellipse cx="626.3" cy="55.8" rx="6" ry="3.2" fill="#000"/>
<rect x="619.6" y="61" width="13.6" height="4.8" fill="#000"/>
<path d="M626.3,50 v17.8" stroke="#ff5060" stroke-opacity="0.55" stroke-width="2.2"/>
<path d="M626.3,50 v17.8" stroke="#c02030" stroke-width="1" stroke-dasharray="1,1"/>
<!-- prefs -->
<path d="M660.5,55.8 L669.8,64" stroke="#3a3a3a" stroke-width="3.2" stroke-linecap="round"/>
<path d="M660.5,55.8 L669.8,64" stroke="#c8c8c8" stroke-width="1.4" stroke-linecap="round"/>
<circle cx="658.2" cy="53.4" r="2.9" fill="#c4c4c4" stroke="#3a3a3a" stroke-width="1.2"/>
<path d="M656.8,49.2 L658.3,53.2 L661.2,49.6 Z" fill="#eae7e2"/><path d="M656.8,50.5 L658.3,53.2 L660.4,50.6" fill="none" stroke="#3a3a3a" stroke-width="0.9"/>
<path d="M669.2,53.2 L663,59.4" stroke="#3a3a3a" stroke-width="2.4" stroke-linecap="round"/>
<path d="M669.2,53.2 L663,59.4" stroke="#bbb" stroke-width="0.9"/>
<circle cx="669.4" cy="52.8" r="1.8" fill="#ccc" stroke="#3a3a3a" stroke-width="1.1"/>
<path d="M661.6,60.4 L657.2,64.6" stroke="#2c3440" stroke-width="5.6" stroke-linecap="round"/>
<path d="M661.6,60.4 L657.2,64.6" stroke="#94b0d4" stroke-width="3.6" stroke-linecap="round"/>
<!-- doc props -->
<defs><linearGradient id="gdp" x1="0" y1="0" x2="1" y2="1"><stop offset="0" stop-color="#f2f2f2"/><stop offset="1" stop-color="#bdbdbd"/></linearGradient></defs>
<rect x="678.3" y="51.6" width="15" height="15.2" fill="url(#gdp)" stroke="#2f2f2f" stroke-width="1.1"/>
<path d="M690.2,51.8 L693.2,51.8 L693.2,55 Z" fill="#222"/>
<path d="M683.2,58.6 L683.2,63.2" stroke="#333" stroke-width="2.8"/>
<path d="M683.2,58.6 L683.2,63.2" stroke="#e0e0e0" stroke-width="1.1"/>
<circle cx="683.2" cy="57.2" r="2.4" fill="#e0e0e0" stroke="#333" stroke-width="1.2"/>
<rect x="682.3" y="54" width="1.8" height="2.8" fill="#ececec"/>
<circle cx="683.2" cy="64.6" r="2.4" fill="#e0e0e0" stroke="#333" stroke-width="1.2"/>
<rect x="682.3" y="65" width="1.8" height="2.6" fill="#333"/>
<!-- toolbar2 -->
<g id="rot">
<path d="M25.2,84 L26.6,84 L28.3,95.5 L30,98.6 L23.6,98.6 L24.6,95.5 Z" fill="#000"/>
<path d="M17.8,95.6 L31.8,89.8 L31.6,95.8 Z" fill="#b9e22c" stroke="#000" stroke-width="1.1" stroke-linejoin="round"/>
<path d="M19,90 Q20,86 24.2,84.6" fill="none" stroke="#ff3a3a" stroke-width="1.6" stroke-dasharray="1.1,1.1"/>
<path d="M17,89 L21,89 L19,92.2 Z" fill="#e82020"/>
</g>
<g transform="translate(72.5,0) scale(-1,1)"><use href="#rot"/></g>
<path d="M70.3,84.3 L70.3,98.6 L63.8,98.6 Z" fill="#000"/>
<path d="M72.6,86.8 L72.6,98.2 L78.8,98.2 Z" fill="#b9e22c" stroke="#000" stroke-width="1.1"/>
<path d="M71.5,82.3 v17.8" stroke="#ff4a4a" stroke-width="1.6" stroke-dasharray="1.1,1.1"/>
<path d="M88.8,84 L103,90 L88.8,90 Z" fill="#000"/>
<path d="M89.3,92.2 L101,92.2 L89.3,98.8 Z" fill="#b9e22c" stroke="#000" stroke-width="1.1"/>
<path d="M87,91.1 h17.5" stroke="#ff4a4a" stroke-width="1.7" stroke-dasharray="1.1,1.1"/>
<!-- z-order -->
<g stroke-linecap="round">
<path d="M133.8,84.2 h4.2 M133.8,87.8 h4.2 M133.8,91.2 h4.2 M133.8,94.6 h4.2" stroke="#000" stroke-width="2.2"/>
<path d="M126,98.5 h12" stroke="#000" stroke-width="3.2"/><path d="M126,98.5 h12" stroke="#9cb84a" stroke-width="1.8"/>
<path d="M127.2,82.5 v11" stroke="#ff3a3a" stroke-width="1.3" stroke-dasharray="1.1,1.1"/><path d="M125.5,93 L127.2,96 L129,93 Z" fill="#e02020"/>
<path d="M157.5,84.2 h4.2 M153,87.8 h8.7 M157.5,91.2 h4.2 M157.5,98.5 h4.2" stroke="#000" stroke-width="2.2"/>
<path d="M153,95 h8.7" stroke="#000" stroke-width="3.2"/><path d="M153,95 h8.7" stroke="#9cb84a" stroke-width="1.8"/>
<path d="M151,87.5 Q146,88.5 146.3,91.5 Q146.8,94 149.5,94.8" fill="none" stroke="#ff5050" stroke-opacity="0.75" stroke-width="1.1" stroke-dasharray="0.9,1.2"/><circle cx="149" cy="94.6" r="1.4" fill="#e02030"/>
<path d="M170.2,84.2 h4.2 M170.2,91.2 h4.2 M170.2,94.6 h8.7 M170.2,98.5 h4.2" stroke="#000" stroke-width="2.2"/>
<path d="M170.2,88 h8.7" stroke="#000" stroke-width="3.2"/><path d="M170.2,88 h8.7" stroke="#9cb84a" stroke-width="1.8"/>
<path d="M181,88 Q186,88.8 185.6,91.5 Q185,94.5 181,95" fill="none" stroke="#ff5050" stroke-opacity="0.75" stroke-width="1.1" stroke-dasharray="0.9,1.2"/><circle cx="182.5" cy="88.3" r="1.4" fill="#e02030"/>
<path d="M193.2,88.3 h4.8 M193.2,91.7 h4.8 M193.2,95 h4.8 M193.2,98.4 h4.8" stroke="#000" stroke-width="2.2"/>
<path d="M193,84.5 h12" stroke="#000" stroke-width="3.2"/><path d="M193,84.5 h12" stroke="#9cb84a" stroke-width="1.8"/>
<path d="M204.5,88 v11" stroke="#ff3a3a" stroke-width="1.3" stroke-dasharray="1.1,1.1"/><path d="M202.8,90 L204.5,87 L206.3,90 Z" fill="#e02020"/>
</g>
<!-- spin arrows -->
<g id="spin" fill="#222"><path d="M268,90 L270.5,87.2 L273,90 Z M268,93 L270.5,95.8 L273,93 Z"/></g>
<use href="#spin" x="56.7"/><use href="#spin" x="128.6"/><use href="#spin" x="200.2"/>
<path d="M516,90 L519.5,85.7 L523,90 Z M516,91.5 L519.5,95.8 L523,91.5 Z" fill="#222"/>
<!-- lock -->
<path d="M409.2,90 Q409.2,86.5 411.3,86.5 Q413.4,86.5 413.4,90" fill="none" stroke="#222" stroke-width="0.9"/>
<rect x="408.4" y="89.8" width="5.8" height="4.6" rx="1.6" fill="#111"/>
<!-- toggle buttons -->
<rect x="548.5" y="83.5" width="14" height="15" rx="2" fill="#d5d3cd" stroke="#a7a299"/>
<rect x="552.3" y="87.3" width="2.2" height="8.3" fill="#777"/><rect x="555.6" y="87.3" width="2.4" height="8.3" fill="#000"/>
<path d="M567,88 Q572,88 572.5,94.8 M567.2,90.5 Q569.6,90.8 570,94.8" fill="none" stroke="#222" stroke-width="1.2"/>
<rect x="578.8" y="83.5" width="14.3" height="15" rx="2" fill="#d5d3cd" stroke="#a7a299"/>
<rect x="594.3" y="83.5" width="14" height="15" rx="2" fill="#d5d3cd" stroke="#a7a299"/>
<rect x="582.3" y="87" width="8" height="8.7" fill="url(#gsq)"/>
<path d="M597,87 L606,87 L602.5,90.5 Z M597,96 L606,96 L602.5,92.5 Z" fill="#000"/>
<circle cx="601.5" cy="91.5" r="1.8" fill="#000"/>
<!-- status icons -->
<ellipse cx="141" cy="506.2" rx="3.6" ry="2.4" fill="none" stroke="#222" stroke-width="1.2"/>
<circle cx="141" cy="506.2" r="1.2" fill="#222"/>
<path d="M138,503.5 L144,503.5" stroke="#222" stroke-width="0.8" stroke-dasharray="0.8,0.8"/>
<path d="M153.4,505 Q153.4,502.2 156.4,502.2 Q159.4,502.2 159.4,505" fill="none" stroke="#222" stroke-width="0.9"/>
<path d="M152.6,506 L160.2,506 Q160.2,510.3 156.4,510.3 Q152.6,510.3 152.6,506 Z" fill="#111"/>
<path d="M14.5,113 L14.5,117" stroke="none"/>
<!-- status zoom spin -->
<path d="M46.8,504.3 L49.5,501.2 L52.2,504.3 Z M46.8,507.5 L49.5,510.6 L52.2,507.5 Z" fill="#222"/>
<!-- ruler zoom icon -->
<circle cx="839.2" cy="116.2" r="2.3" fill="none" stroke="#333" stroke-width="1.1"/>
<path d="M840.9,117.9 L843,120" stroke="#333" stroke-width="1.4"/>
<!-- scroll arrows -->
<path d="M835.8,132.2 L839,128.8 L842.2,132.2 Z" fill="#111"/>
<path d="M835.8,470.3 L839,473.8 L842.2,470.3 Z" fill="#111"/>
<path d="M58.8,483.8 L54.8,486.9 L58.8,490 Z" fill="#111"/>
<path d="M823.2,484 L827.2,486.9 L823.2,489.8 Z" fill="#111"/>
<!-- layer combo arrow + sep -->
<path d="M228.5,500 v14" stroke="#a9a59c"/>
<path d="M231.8,504 L240.5,504 L236.2,508.5 Z" fill="#111"/>
</svg>

<svg class="a" style="left:0;top:0" width="852" height="523" viewBox="0 0 852 523">
<defs>
<linearGradient id="grect" x1="0" y1="0" x2="1" y2="1"><stop offset="0" stop-color="#6f88e0"/><stop offset="1" stop-color="#2c44a8"/></linearGradient>
<radialGradient id="gcirc" cx="0.4" cy="0.35" r="0.7"><stop offset="0" stop-color="#e08870"/><stop offset="1" stop-color="#a84a34"/></radialGradient>
<linearGradient id="gbtn" x1="0" y1="0" x2="0" y2="1"><stop offset="0" stop-color="#cfcdc7"/><stop offset="1" stop-color="#c6c4be"/></linearGradient>
<linearGradient id="gpen" x1="0" y1="0" x2="1" y2="0"><stop offset="0" stop-color="#e8d838"/><stop offset="0.5" stop-color="#f0f060"/><stop offset="1" stop-color="#b8a020"/></linearGradient>
</defs>
<!-- selected tool button -->
<rect x="4.5" y="118.5" width="30" height="30" rx="2" fill="#c9c7c1" stroke="#a29e96"/>
<path d="M5.5,147.5 h28 v-28" fill="none" stroke="#d6d4cf" stroke-width="0.8"/>
<!-- arrow -->
<path d="M16.2,127.4 L16.2,139.6 L19,137 L21.2,141.8 L23.2,140.9 L21,136.2 L24.6,136 Z" fill="#000"/>
<!-- node -->
<path d="M18,157.2 L25.5,156.6" stroke="#111" stroke-width="1"/>
<path d="M14.6,160 L12,166" stroke="#2020c0" stroke-width="1"/>
<rect x="13.5" y="155.5" width="4.8" height="4.8" fill="#7a7af0" stroke="#1010c0" stroke-width="1.1"/>
<rect x="24.6" y="155.2" width="2.8" height="2.8" fill="#1010c0"/>
<circle cx="12.2" cy="166.3" r="1.4" fill="#1010c0"/>
<path d="M17.6,158.6 L24.6,168.6 L21.6,168.8 L20.2,171.4 Z" fill="#000"/>
<!-- zoom -->
<path d="M21.8,196 L27.3,201.6" stroke="#111" stroke-width="3" stroke-linecap="round"/>
<circle cx="17.6" cy="191.7" r="5.8" fill="#c2d0dc" stroke="#263440" stroke-width="1.4"/>
<path d="M17.6,188.3 v6.8 M14.2,191.7 h6.8" stroke="#2a2a2a" stroke-width="2"/>
<path d="M17.6,188.3 v6.8 M14.2,191.7 h6.8" stroke="#f0c040" stroke-width="0.9"/>
<!-- rect -->
<rect x="13.2" y="218.5" width="13.4" height="12.9" fill="url(#grect)" stroke="#14204a" stroke-width="1"/>
<!-- circle -->
<circle cx="19.7" cy="255.6" r="6.6" fill="url(#gcirc)" stroke="#3a1c14" stroke-width="1.1"/>
<!-- star -->
<path d="M19.7,277.8 L22,283 L27.6,283.3 L23.3,286.8 L24.8,292.4 L19.7,289.3 L14.6,292.4 L16.1,286.8 L11.8,283.3 L17.4,283 Z" fill="#bccb45" stroke="#303618" stroke-width="1.1" stroke-linejoin="round"/>
<!-- spiral -->
<path d="M19.89,317.81 L19.80,317.94 L19.70,318.06 L19.57,318.17 L19.41,318.26 L19.24,318.33 L19.05,318.37 L18.84,318.39 L18.63,318.37 L18.42,318.33 L18.20,318.25 L17.99,318.13 L17.80,317.98 L17.62,317.80 L17.47,317.58 L17.34,317.34 L17.25,317.08 L17.19,316.79 L17.17,316.50 L17.20,316.19 L17.27,315.88 L17.38,315.58 L17.54,315.29 L17.75,315.02 L18.00,314.77 L18.29,314.55 L18.61,314.37 L18.96,314.24 L19.34,314.15 L19.73,314.12 L20.13,314.14 L20.54,314.22 L20.93,314.35 L21.32,314.54 L21.68,314.79 L22.01,315.10 L22.30,315.45 L22.54,315.84 L22.73,316.28 L22.86,316.74 L22.93,317.23 L22.93,317.73 L22.86,318.23 L22.73,318.73 L22.52,319.21 L22.24,319.67 L21.89,320.09 L21.49,320.47 L21.03,320.79 L20.52,321.05 L19.97,321.25 L19.40,321.36 L18.80,321.40 L18.20,321.36 L17.59,321.23 L17.01,321.02 L16.45,320.73 L15.92,320.36 L15.45,319.91 L15.03,319.40 L14.69,318.83 L14.42,318.20 L14.24,317.54 L14.14,316.85 L14.15,316.15 L14.24,315.44 L14.44,314.75 L14.73,314.08 L15.12,313.45 L15.59,312.87 L16.14,312.35 L16.77,311.91 L17.45,311.55 L18.19,311.29 L18.97,311.13 L19.77,311.07 L20.58,311.12 L21.38,311.28 L22.16,311.56 L22.90,311.94 L23.60,312.42 L24.23,313.00 L24.78,313.67 L25.24,314.41 L25.60,315.21 L25.84,316.07 L25.98,316.96 L25.99,317.87 L25.87,318.78 L25.63,319.67 L25.27,320.53 L24.80,321.35 L24.21,322.09 L23.51,322.76 L22.73,323.33 L21.87,323.80 L20.95,324.15 L19.97,324.37 L18.97,324.46 L17.96,324.41 L16.95,324.23" fill="none" stroke="#2a2a2a" stroke-width="1.4"/>
<!-- pencil -->
<path d="M12.2,339.4 Q15.2,338 15.9,340.2 Q16,342.2 12.4,346.3 Q16.2,343.6 18.8,344.9 Q19.4,346.2 17.8,349 Q16.6,352.6 19.6,353.9 Q23,354.6 25.9,351.6" fill="none" stroke="#222" stroke-width="1.3" stroke-linejoin="round"/>
<path d="M20.8,353 L25,339 L28.8,340.3 L24.6,354.3 L21.8,355.4 Z" fill="url(#gpen)" stroke="#6b5a10" stroke-width="0.5"/>
<path d="M25,339 L25.7,337.2 Q27.7,337 29.4,338.6 L28.8,340.3 Z" fill="#e0907a"/>
<!-- pen -->
<path d="M13,370.3 L21.5,370.3 M13.4,370.3 L18.2,377.2 Q19.8,381 18.4,383.2 Q16.4,385 13,384.5 M18.4,383.2 Q19.5,384.6 21.5,384.4" fill="none" stroke="#111" stroke-width="1.3"/>
<circle cx="13.2" cy="384.4" r="1.3" fill="#fff" stroke="#222" stroke-width="0.8"/>
<circle cx="19.8" cy="384.4" r="1.3" fill="#fff" stroke="#222" stroke-width="0.8"/>
<path d="M19.8,384.2 L24.4,371.4 L28.2,372.8 L23.2,385.8 L20.6,386.6 Z" fill="url(#gpen)" stroke="#4b3f10" stroke-width="0.7"/>
<path d="M24.4,371.4 L25.2,369.2 L29,370.6 L28.2,372.8 Z" fill="#d0604a"/>
<!-- calligraphy -->
<path d="M10.8,399.4 Q14.5,399.2 17,400.8 Q19.8,403 19,408 Q18.4,412 19.2,414.3 Q20.4,415.8 23.5,415.2 L27.2,414.2 Q22.5,417.6 18.8,417 Q14.2,416 14,410.5 Q14,405.5 14.4,403.4 Q13.8,401 10.8,399.4 Z" fill="#000"/>
<path d="M20.2,414.2 L24.6,400.6 L28.6,402 L24,415.6 L21.2,417 Z" fill="url(#gpen)" stroke="#6b5a10" stroke-width="0.5"/>
<path d="M24.6,400.6 L25.4,398.6 Q27.4,398.4 29.3,400 L28.6,402 Z" fill="#e0907a"/>
<!-- text tool -->
<path d="M12.2,446.2 L17,431.8 L21.6,431.8 L25,446.2 L21.2,446.2 L20.6,443.6 L17.6,443.6 L16.8,446.2 Z M18.3,440.6 L20,440.6 L19.1,436.6 Z" fill="#000"/>
<path d="M24.8,430.6 h3 M26.3,430.6 v16 M24.8,446.6 h3" stroke="#444" stroke-width="0.9"/>
<!-- dropper -->
<path d="M13.8,476.2 L21,467.2" stroke="#333" stroke-width="3.2" stroke-linecap="round"/>
<path d="M13.8,476.2 L21,467.2" stroke="#d8d8d8" stroke-width="1.1"/>
<path d="M19.2,465.2 L23.4,469.4" stroke="#111" stroke-width="2.8"/>
<circle cx="23.6" cy="464.4" r="2.8" fill="#000"/>
</svg>


</body></html>
